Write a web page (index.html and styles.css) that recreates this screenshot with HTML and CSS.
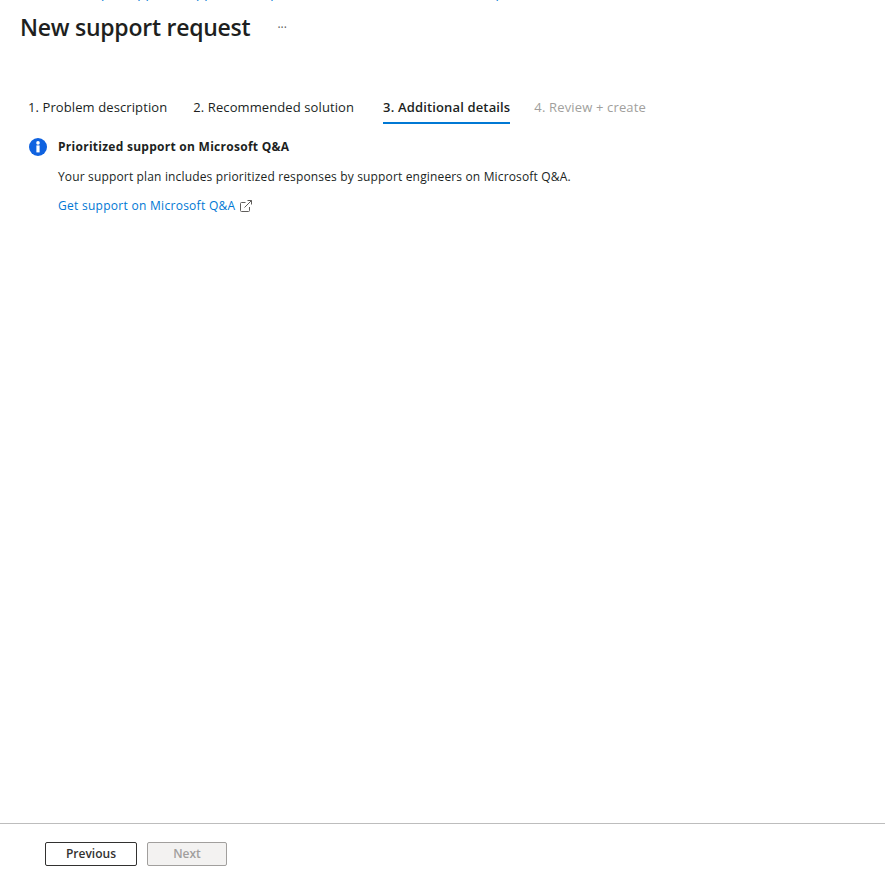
FILE: index.html
```html
<!DOCTYPE html>
<html lang="en">
<head>
<meta charset="utf-8">
<title>New support request</title>
<link rel="stylesheet" href="styles.css">
</head>
<body>
<div class="page">
  <nav class="crumbs">
    <div class="crumb-row">
      <a class="c1">Home</a>
      <a class="c2">Help + support</a>
      <a class="c3">Support</a>
      <a class="c4">plans</a>
      <a class="c5">Help</a>
    </div>
  </nav>
  <header class="head">
    <h1>New support request</h1>
    <span class="more">···</span>
  </header>
  <div class="tabs">
    <span class="tab">1. Problem description</span>
    <span class="tab">2. Recommended solution</span>
    <span class="tab active">3. Additional details</span>
    <span class="tab off">4. Review + create</span>
  </div>
  <main class="notice">
    <svg class="info" width="18" height="18" viewBox="0 0 18 18"><circle cx="9" cy="9" r="9" fill="#0f62e0"/><rect x="7.4" y="7.4" width="3.2" height="7" fill="#fff"/><circle cx="9" cy="4.9" r="1.8" fill="#fff"/></svg>
    <div class="body">
      <h2>Prioritized support on Microsoft Q&amp;A</h2>
      <p>Your support plan includes prioritized responses by support engineers on Microsoft Q&amp;A.</p>
      <a class="link">Get support on Microsoft Q&amp;A
        <svg class="ext" width="12" height="12" viewBox="0 0 12 12" fill="none" stroke="#605e5c" stroke-width="1"><path d="M5.5 2.5H1.5a1 1 0 0 0-1 1v7a1 1 0 0 0 1 1h7a1 1 0 0 0 1-1V7"/><path d="M4.5 7.5 11.5.5M7.5.5h4v4"/></svg>
      </a>
    </div>
  </main>
  <footer class="foot">
    <button class="btn">Previous</button>
    <button class="btn dis" disabled>Next</button>
  </footer>
</div>
</body>
</html>
```
FILE: styles.css
```css
html, body { margin: 0; height: 100%; }
body { font-family: "Open Sans", "Noto Sans", sans-serif; color: #201f1e; background: #fff; overflow: hidden; }
.page { height: 879px; display: flex; flex-direction: column; }
.crumbs { height: 2px; overflow: hidden; flex: none; }
.crumb-row { display: flex; margin-top: -14px; padding-left: 21px; font-size: 13px; line-height: 14px; color: #0078d4; white-space: nowrap; letter-spacing: .3px; }
.c2 { margin-left: 21px; word-spacing: -1px; }
.c3 { margin-left: 8px; }
.c4 { margin-left: 39px; }
.c5 { margin-left: 170px; }
.head { display: flex; align-items: center; padding: 9px 0 0 20px; height: 32px; flex: none; }
h1 { margin: 0; font-size: 23px; font-weight: 600; line-height: 32px; letter-spacing: -.25px; }
.more { margin-left: 27px; font-size: 12px; color: #605e5c; }
.tabs { display: flex; margin: 50px 0 0 28px; gap: 26px; height: 30px; flex: none; }
.tab { font-size: 13px; line-height: 28px; height: 29px; white-space: nowrap; letter-spacing: .1px; }
.active { font-weight: 600; border-bottom: 2px solid #0078d4; margin-left: 3px; margin-right: -2px; letter-spacing: .15px; }
.off { color: #a19f9d; letter-spacing: .15px; }
.notice { display: flex; flex: 1; padding: 15px 0 0 29px; gap: 11px; }
.info { flex: none; }
h2 { margin: 0; font-size: 12px; font-weight: 700; line-height: 18px; letter-spacing: .27px; }
p { margin: 12px 0 0; font-size: 12px; line-height: 18px; letter-spacing: .155px; }
.link { display: flex; align-items: center; gap: 5px; margin-top: 11px; font-size: 12px; line-height: 18px; color: #0078d4; letter-spacing: .28px; }
.foot { border-top: 1px solid #bdbdbd; height: 56px; flex: none; display: flex; gap: 10px; padding: 18px 0 0 45px; box-sizing: border-box; }
.btn { width: 92px; height: 24px; border: 1px solid #323130; border-radius: 2px; background: #fff; color: #323130; font: 600 12px "Open Sans", sans-serif; padding: 0 0 2px; }
.dis { width: 80px; background: #f3f2f1; border-color: #a19f9d; color: #a19f9d; }
```
